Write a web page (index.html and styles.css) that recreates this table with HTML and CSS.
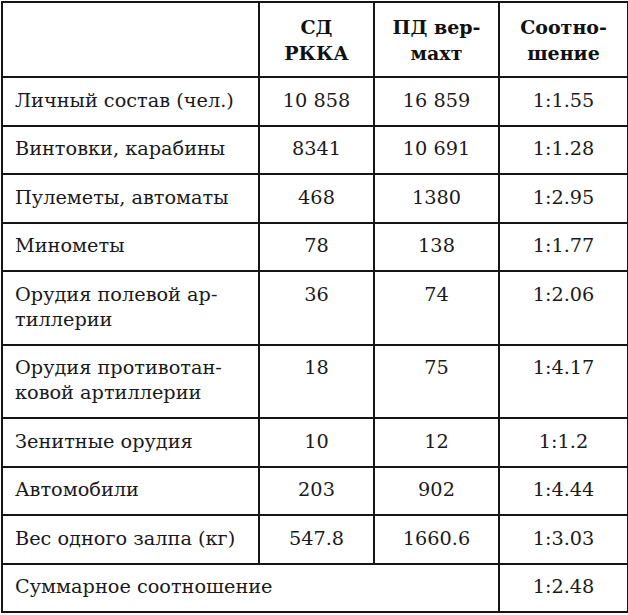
FILE: index.html
```html
<!DOCTYPE html>
<html lang="ru">
<head>
<meta charset="utf-8">
<title>Соотношение</title>
<link rel="stylesheet" href="styles.css">
</head>
<body>
<div class="page">
<table class="cmp">
  <colgroup>
    <col class="c-name">
    <col class="c-a">
    <col class="c-b">
    <col class="c-r">
  </colgroup>
  <thead>
    <tr>
      <th></th>
      <th>СД<br>РККА</th>
      <th>ПД вер-<br>махт</th>
      <th>Соотно-<br>шение</th>
    </tr>
  </thead>
  <tbody>
    <tr><td class="name">Личный состав (чел.)</td><td>10 858</td><td>16 859</td><td>1:1.55</td></tr>
    <tr><td class="name">Винтовки, карабины</td><td>8341</td><td>10 691</td><td>1:1.28</td></tr>
    <tr><td class="name">Пулеметы, автоматы</td><td>468</td><td>1380</td><td>1:2.95</td></tr>
    <tr><td class="name">Минометы</td><td>78</td><td>138</td><td>1:1.77</td></tr>
    <tr><td class="name">Орудия полевой ар-<br>тиллерии</td><td>36</td><td>74</td><td>1:2.06</td></tr>
    <tr><td class="name">Орудия противотан-<br>ковой артиллерии</td><td>18</td><td>75</td><td>1:4.17</td></tr>
    <tr><td class="name">Зенитные орудия</td><td>10</td><td>12</td><td>1:1.2</td></tr>
    <tr><td class="name">Автомобили</td><td>203</td><td>902</td><td>1:4.44</td></tr>
    <tr><td class="name">Вес одного залпа (кг)</td><td>547.8</td><td>1660.6</td><td>1:3.03</td></tr>
    <tr><td class="name" colspan="3">Суммарное соотношение</td><td>1:2.48</td></tr>
  </tbody>
</table>
</div>
</body>
</html>
```
FILE: styles.css
```css
html, body {
  margin: 0;
  padding: 0;
  background: #ffffff;
}
.page {
  padding: 1px 0 0 1px;
}
.cmp {
  border-collapse: collapse;
  table-layout: fixed;
  width: 626px;
  color: #1a1a1a;
  font-family: "DejaVu Serif", "Liberation Serif", serif;
  font-size: 19.3px;
}
.c-name { width: 257px; }
.c-a { width: 115px; }
.c-b { width: 125px; }
.c-r { width: 129px; }
.cmp th,
.cmp td {
  border: 2px solid #151515;
}
.cmp th {
  font-family: "DejaVu Serif", "Liberation Serif", serif;
  font-weight: bold;
  font-size: 19px;
  line-height: 25.5px;
  padding: 12px 2px 10px;
  text-align: center;
  vertical-align: top;
  color: #111111;
}
.cmp td {
  line-height: 25px;
  padding: 9.5px 4px 12px;
  text-align: center;
  vertical-align: top;
  white-space: nowrap;
}
.cmp td.name {
  text-align: left;
  padding-left: 12px;
}
```
